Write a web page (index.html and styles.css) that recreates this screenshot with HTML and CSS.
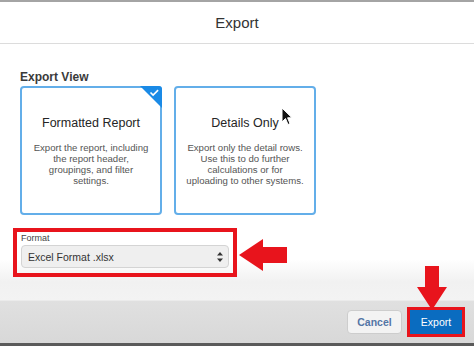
FILE: index.html
```html
<!DOCTYPE html>
<html lang="en">
<head>
    <meta charset="UTF-8">
    <meta name="viewport" content="width=device-width, initial-scale=1.0">
    <title>Export</title>
    <link rel="stylesheet" href="styles.css">
</head>
<body>
    <div class="modal">
        <div class="topbar"></div>
        <header class="modal-header">
            <h2>Export</h2>
        </header>

        <main class="modal-body">
            <div class="section-label">Export View</div>
            <div class="cards">
                <div class="card selected">
                    <svg class="check" width="22" height="22" viewBox="0 0 22 22">
                        <path d="M0 0H22V22Z" fill="#1a8ae6"/>
                        <path d="M10.5 6.5l2.6 2.6 5-5" fill="none" stroke="#fff" stroke-width="1.6"/>
                    </svg>
                    <div class="card-title">Formatted Report</div>
                    <div class="card-desc">Export the report, including<br>the report header,<br>groupings, and filter<br>settings.</div>
                </div>
                <div class="card">
                    <div class="card-title">Details Only</div>
                    <div class="card-desc">Export only the detail rows.<br>Use this to do further<br>calculations or for<br>uploading to other systems.</div>
                </div>
            </div>

            <div class="format-field">
                <label class="field-label">Format</label>
                <div class="select">
                    <span>Excel Format .xlsx</span>
                    <svg width="6" height="12" viewBox="0 0 6 12">
                        <path d="M0 4.5L3 1l3 3.5Z M0 7.5L3 11l3-3.5Z" fill="#333"/>
                    </svg>
                </div>
            </div>
        </main>

        <footer class="modal-footer">
            <button class="btn btn-cancel">Cancel</button>
            <button class="btn btn-export">Export</button>
        </footer>
        <div class="bottombar"></div>

        <!-- annotations over the dialog -->
        <svg class="arrow-left" width="48" height="34" viewBox="0 0 48 34">
            <path d="M0 17L24 1V9H48V25H24V33Z" fill="#e8141c"/>
        </svg>
        <svg class="arrow-down" width="32" height="44" viewBox="0 0 32 44">
            <path d="M9 0H23V21H31L16 44L1 21H9Z" fill="#e8141c"/>
        </svg>
        <svg class="cursor" width="12" height="19" viewBox="0 0 12 19">
            <path d="M1 1V15L4.5 11.5L7 17.5L9 16.6L6.6 10.8H11Z" fill="#111" stroke="#fff" stroke-width="1"/>
        </svg>
    </div>
</body>
</html>
```

FILE: styles.css
```css
body {
    margin: 0;
    font-family: "Liberation Sans", Arial, sans-serif;
    background: #fff;
}
.modal {
    position: relative;
    width: 474px;
    height: 346px;
    display: flex;
    flex-direction: column;
    overflow: hidden;
}
.topbar {
    height: 2px;
    background: #a4a4a4;
}
.modal-header {
    height: 41px;
    border-bottom: 1px solid #dcdcdc;
    display: flex;
    align-items: center;
    justify-content: center;
}
.modal-header h2 {
    margin: 0;
    font-size: 15px;
    font-weight: normal;
    color: #333;
}
.modal-body {
    flex: 1;
    padding: 26px 20px 0;
    background: linear-gradient(#fff 84%, #f1f1f1 93%, #f3f3f3);
}
.section-label {
    font-size: 12px;
    font-weight: bold;
    line-height: 14px;
    color: #3a3a3a;
    margin-bottom: 2px;
}
.cards {
    display: grid;
    grid-template-columns: 142px 142px;
    gap: 12px;
}
.card {
    position: relative;
    height: 129px;
    box-sizing: border-box;
    border: 2px solid #63aee9;
    border-radius: 4px;
    padding: 27px 4px 0;
    text-align: center;
    background: #fff;
}
.check {
    position: absolute;
    top: -2px;
    right: -2px;
    border-top-right-radius: 3px;
}
.card-title {
    font-size: 12.5px;
    line-height: 16px;
    color: #252525;
}
.card-desc {
    margin-top: 11px;
    font-size: 9.6px;
    line-height: 11px;
    color: #555;
    white-space: nowrap;
}
.format-field {
    width: 208px;
    margin: 17px 0 0 -3px;
    padding: 1px 4px 5px;
    outline: 4px solid #e8141c;
}
.field-label {
    display: block;
    font-size: 9px;
    line-height: 11px;
    color: #444;
    margin-bottom: 1px;
}
.select {
    height: 23px;
    box-sizing: border-box;
    border: 1px solid #d4d4d4;
    border-radius: 4px;
    background: #efefef;
    display: flex;
    align-items: center;
    justify-content: space-between;
    padding: 0 5px 0 6px;
    font-size: 10.5px;
    color: #333;
}
.modal-footer {
    height: 42px;
    border-top: 1px solid #ebebeb;
    background: linear-gradient(#e0e0e0, #d8d8d8);
    display: flex;
    align-items: center;
    justify-content: flex-end;
    gap: 8px;
    padding-right: 12px;
}
.btn {
    height: 24px;
    border-radius: 4px;
    font-family: inherit;
    font-size: 10.5px;
    padding: 0;
    cursor: pointer;
}
.btn-cancel {
    width: 55px;
    background: #f3f3f3;
    border: 1px solid #cdcdcd;
    color: #5476a6;
    font-weight: bold;
}
.btn-export {
    width: 52px;
    background: #0a6cc0;
    border: none;
    border-radius: 0;
    color: #fff;
    outline: 3px solid #e8141c;
}
.bottombar {
    height: 3px;
    background: #5a5a5a;
}
.arrow-left {
    position: absolute;
    left: 239px;
    top: 238px;
}
.arrow-down {
    position: absolute;
    left: 416px;
    top: 266px;
}
.cursor {
    position: absolute;
    left: 281px;
    top: 107px;
}
```
